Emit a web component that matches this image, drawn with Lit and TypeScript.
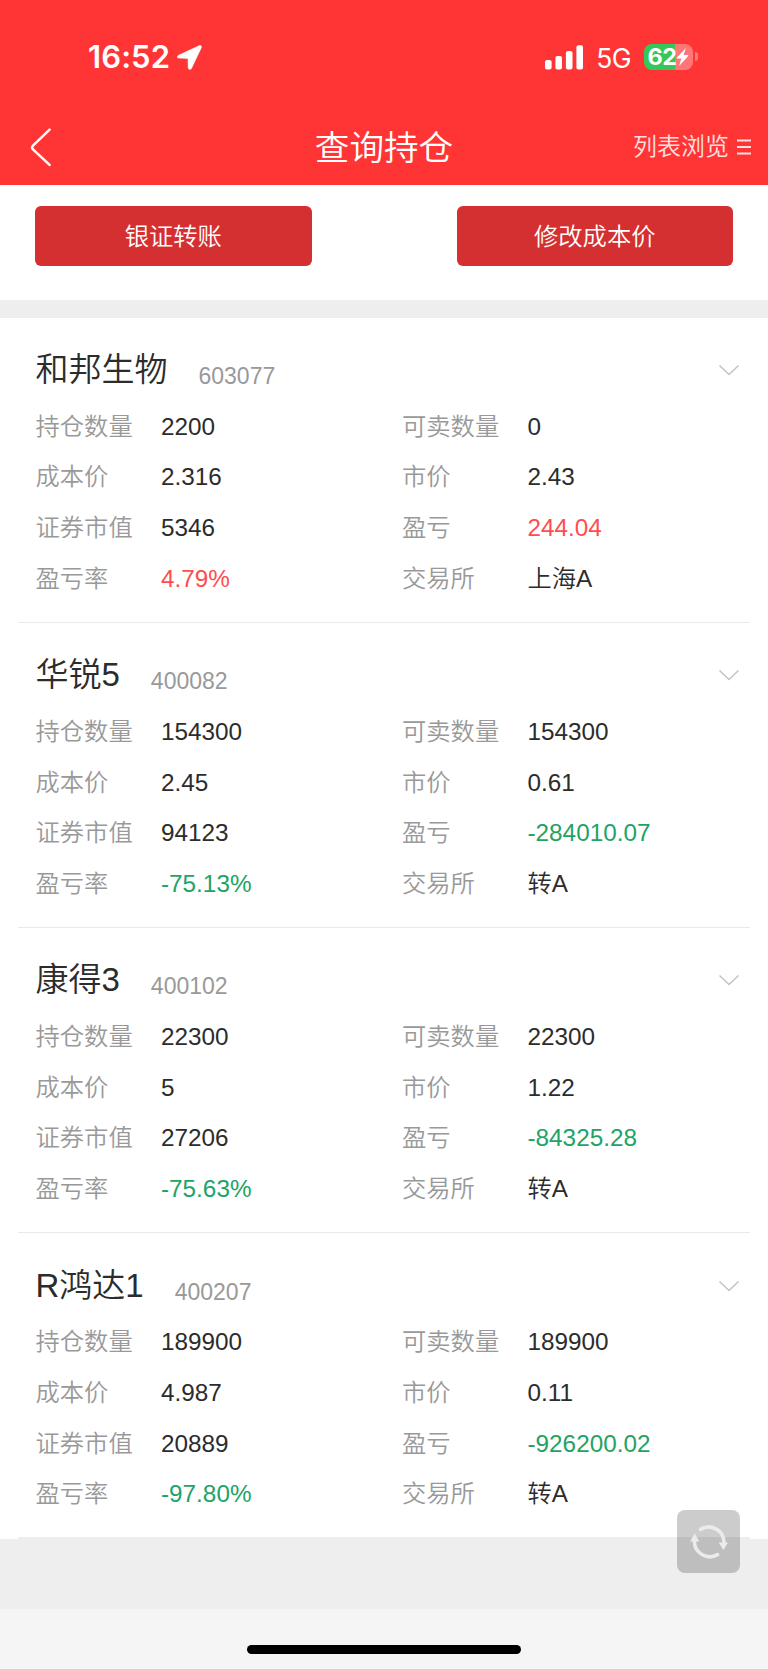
import { LitElement, html, css } from "lit";
import { customElement, property } from "lit/decorators.js";

type Tone = "plain" | "up" | "down";
interface Field { label: string; value: string; tone?: Tone; }
interface Holding { name: string; code: string; fields: Field[]; }

function holding(name: string, code: string, qty: string, sellable: string, cost: string, price: string, worth: string, profit: string, rate: string, market: string): Holding {
  const tone: Tone = profit.startsWith("-") ? "down" : "up";
  return {
    name, code,
    fields: [
      { label: "持仓数量", value: qty },
      { label: "可卖数量", value: sellable },
      { label: "成本价", value: cost },
      { label: "市价", value: price },
      { label: "证券市值", value: worth },
      { label: "盈亏", value: profit, tone },
      { label: "盈亏率", value: rate, tone },
      { label: "交易所", value: market },
    ],
  };
}

const HOLDINGS: Holding[] = [
  holding("和邦生物", "603077", "2200", "0", "2.316", "2.43", "5346", "244.04", "4.79%", "上海A"),
  holding("华锐5", "400082", "154300", "154300", "2.45", "0.61", "94123", "-284010.07", "-75.13%", "转A"),
  holding("康得3", "400102", "22300", "22300", "5", "1.22", "27206", "-84325.28", "-75.63%", "转A"),
  holding("R鸿达1", "400207", "189900", "189900", "4.987", "0.11", "20889", "-926200.02", "-97.80%", "转A"),
];

@customElement("status-bar")
export class StatusBar extends LitElement {
  static styles = css`
    :host { display: flex; justify-content: space-between; align-items: center; box-sizing: border-box; height: 114px; padding: 0 70.5px 0 88px; color: #fff; font-family: Inter, sans-serif; }
    .left, .right { display: flex; align-items: center; }
    .time { font-size: 31px; font-weight: 600; line-height: 40px; letter-spacing: 0.1px; }
    .arrow { margin-left: 7px; }
    .net { font-size: 26.5px; line-height: 40px; margin-left: 12px; margin-top: 1px; letter-spacing: -0.6px; }
    .battery { display: flex; align-items: center; margin-left: 12.5px; margin-top: -1px; }
    .cell { display: flex; align-items: center; box-sizing: border-box; width: 49px; height: 26px; padding-left: 4px; border-radius: 8px; background: linear-gradient(90deg, #34c759 62.5%, #ff7676 62.5%); }
    .level { font-size: 23.5px; font-weight: 700; line-height: 26px; letter-spacing: -0.6px; }
    .tip { width: 3px; height: 9px; margin-left: 2px; border-radius: 0 4px 4px 0; background: #ff7676; }
  `;
  render() {
    return html`
      <div class="left">
        <span class="time">16:52</span>
        <svg class="arrow" width="25" height="25" viewBox="0 0 25 25"><path d="M22.4 .6 1.6 10.2C-.2 11-.1 13 1.8 13.1l9.2.5.2 9.1c.1 2 2.6 2.3 3.4.5L24.3 2.8C24.9 1.2 23.8 0 22.4.6Z" fill="#fff" stroke="#fff" stroke-width=".5"/></svg>
      </div>
      <div class="right">
        <svg width="39" height="25" viewBox="0 0 39 25" fill="#fff">
          <rect x="0" y="15" width="6.6" height="9.6" rx="2"/><rect x="10.4" y="11" width="6.6" height="13.6" rx="2"/><rect x="20.9" y="6" width="6.6" height="18.6" rx="2"/><rect x="31.4" y="0.3" width="6.6" height="24.3" rx="2"/>
        </svg>
        <span class="net">5G</span>
        <div class="battery">
          <div class="cell">
            <span class="level">62</span>
            <svg width="13" height="18" viewBox="0 0 12 18"><path d="M9.4 0 .5 9.6c-.4.5-.2 1 .4 1h4L2.5 18l9-9.8c.5-.6.2-1.1-.4-1.1h-4Z" fill="#fff"/></svg>
          </div>
          <div class="tip"></div>
        </div>
      </div>`;
  }
}

@customElement("nav-bar")
export class NavBar extends LitElement {
  static styles = css`
    :host { display: grid; grid-template-columns: 1fr auto 1fr; align-items: center; height: 67px; padding: 0 17px 0 17px; box-sizing: border-box; color: #fff; }
    .back { display: block; margin: -1px 0 0 13px; }
    .title { font-size: 34.6px; line-height: 50px; font-weight: 350; }
    .mode { display: flex; justify-content: flex-end; align-items: center; gap: 8px; margin-top: -1px; font-size: 24px; line-height: 36px; font-weight: 350; color: #ffe0e0; }
  `;
  render() {
    return html`
      <svg class="back" width="22" height="40" viewBox="0 0 22 40"><path d="M19.6 2.6 3 18.6q-1.8 1.9 0 3.8L19.6 37.8" fill="none" stroke="#fff" stroke-width="2.5" stroke-linecap="round"/></svg>
      <span class="title">查询持仓</span>
      <div class="mode"><span>列表浏览</span>
        <svg width="14" height="16" viewBox="0 0 14 16"><path d="M0 1.5h14M0 8h14M0 14.5h14" stroke="#ffe0e0" stroke-width="2"/></svg>
      </div>`;
  }
}

@customElement("holding-card")
export class HoldingCard extends LitElement {
  @property({ attribute: false }) data!: Holding;
  static styles = css`
    :host { display: block; box-sizing: border-box; height: 305.2px; margin: 0 18px; padding: 27px 10px 0 17.5px; border-bottom: 1.4px solid #eaeaea; }
    :host(:last-child) { height: 306.2px; border-bottom: 2px solid #eee; }
    .head { display: flex; align-items: center; height: 57px; }
    .name { font-size: 33px; line-height: 50px; font-weight: 350; color: #2c2c2c; margin-top: -6px; }
    .code { font-size: 23px; line-height: 30px; color: #999; margin-left: 31px; margin-top: 6px; }
    .chevron { margin-left: auto; margin-top: -5px; }
    .fields { display: grid; grid-template-columns: 366.5px 1fr; grid-auto-rows: 50.6px; }
    .field { display: grid; grid-template-columns: 125.5px 1fr; align-items: center; font-size: 24.3px; line-height: 36px; }
    .label { color: #999; font-weight: 350; }
    .value { color: #2c2c2c; font-size: 24.3px; font-weight: 350; white-space: nowrap; }
    .value.up { color: #ff4d4f; }
    .value.down { color: #22a365; }
  `;
  render() {
    const { name, code, fields } = this.data;
    return html`
      <div class="head">
        <span class="name">${name}</span><span class="code">${code}</span>
        <svg class="chevron" width="22" height="13" viewBox="0 0 22 13"><path d="m1.5 1.5 9.5 9 9.5-9" fill="none" stroke="#c4c4c4" stroke-width="1.6"/></svg>
      </div>
      <div class="fields">
        ${fields.map((f) => html`<div class="field"><span class="label">${f.label}</span><span class="value ${f.tone ?? "plain"}">${f.value}</span></div>`)}
      </div>`;
  }
}

@customElement("app-root")
export class AppRoot extends LitElement {
  static styles = css`
    :host { display: flex; flex-direction: column; position: relative; width: 768px; height: 1669px; overflow: hidden; background: #f5f5f5; font-family: "Liberation Sans", "Noto Sans CJK SC", sans-serif; }
    .top { height: 185px; background: #ff3434; }
    .actions { display: flex; justify-content: space-between; box-sizing: border-box; height: 115px; padding: 21px 35px 0; background: #fff; }
    .btn { height: 59.5px; width: 276.5px; padding: 2px 0 0; border: 0; border-radius: 6px; background: #d53031; color: #fff; font-family: inherit; font-size: 24.3px; font-weight: 350; line-height: 36px; }
    .band { height: 17.6px; background: #eee; }
    .list { background: #fff; }
    .rest { height: 69.6px; background: #eee; }
    .foot { display: flex; justify-content: center; padding-top: 36.4px; }
    .home { width: 274px; height: 9px; border-radius: 5px; background: #000; }
    .refresh { position: absolute; right: 28px; top: 1510px; display: flex; align-items: center; justify-content: center; width: 63px; height: 63px; border-radius: 8px; background: rgba(0, 0, 0, 0.2); }
  `;
  render() {
    return html`
      <header class="top"><status-bar></status-bar><nav-bar></nav-bar></header>
      <div class="actions"><button class="btn">银证转账</button><button class="btn">修改成本价</button></div>
      <div class="band"></div>
      <main class="list">${HOLDINGS.map((h) => html`<holding-card .data=${h}></holding-card>`)}</main>
      <div class="rest"></div>
      <div class="foot"><div class="home"></div></div>
      <div class="refresh">
        <svg width="38" height="36" viewBox="0 0 38 36" fill="none" stroke="#ebebeb" stroke-width="3.6" stroke-linecap="round">
          <path d="M10.5 5.4A15.4 15.4 0 0 1 34 18"/><path d="M27.5 30.6A15.4 15.4 0 0 1 4.4 17"/>
          <path d="M28.6 18.5h9.4l-4.5 7.5ZM0 17.5h9.4L4.7 9.5Z" fill="#ebebeb" stroke="none"/>
        </svg>
      </div>`;
  }
}
